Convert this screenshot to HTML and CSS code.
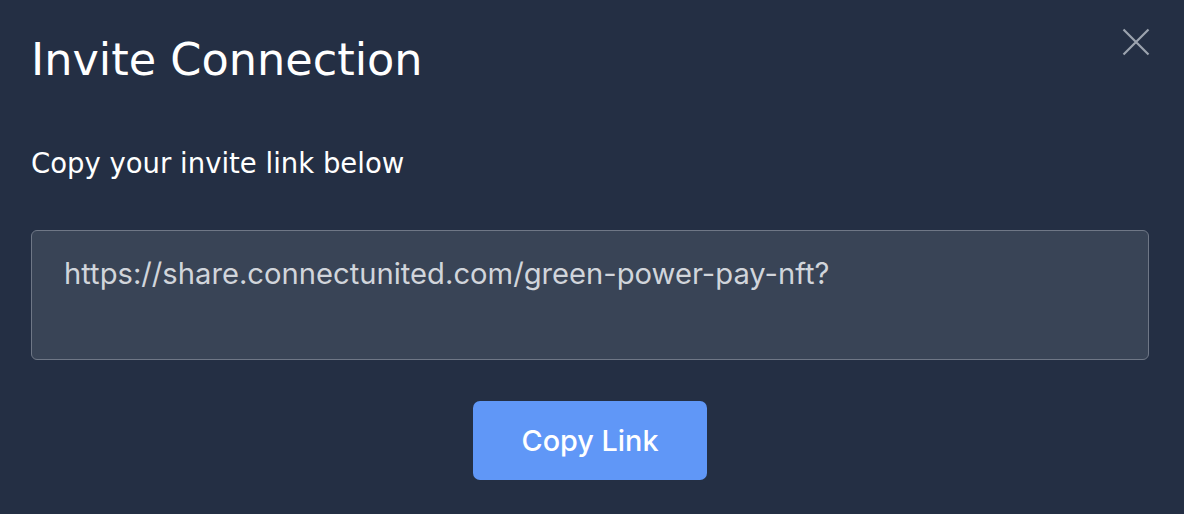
FILE: index.html
```html
<!DOCTYPE html>
<html lang="en">
<head>
<meta charset="utf-8">
<title>Invite Connection</title>
<link rel="stylesheet" href="styles.css">
</head>
<body>
<div class="modal">
  <div class="header">
    <h1 class="title">Invite Connection</h1>
    <button class="close" aria-label="Close">
      <svg width="28" height="28" viewBox="0 0 28 28"><path d="M1.5 1.5 L26.5 26.5 M26.5 1.5 L1.5 26.5" stroke="#9ca3af" stroke-width="2.2" fill="none"/></svg>
    </button>
  </div>
  <p class="subtitle">Copy your invite link below</p>
  <div class="field">https://share.connectunited.com/green-power-pay-nft?</div>
  <div class="actions">
    <button class="copy">Copy Link</button>
  </div>
</div>
</body>
</html>
```
FILE: styles.css
```css
html, body {
  margin: 0;
  padding: 0;
  background: #242f44;
  height: 100%;
}
.modal {
  padding: 28px 35px 0 31px;
  display: flex;
  flex-direction: column;
}
.header {
  display: flex;
  justify-content: space-between;
  align-items: flex-start;
}
.title {
  margin: 0;
  padding-top: 6px;
  font-family: "DejaVu Sans", sans-serif;
  font-weight: normal;
  font-size: 44.6px;
  line-height: 52px;
  color: #ffffff;
}
.close {
  margin: 0;
  padding: 0;
  border: 0;
  background: none;
  width: 28px;
  height: 28px;
  margin-right: -1px;
  display: flex;
}
.subtitle {
  margin: 61px 0 0 0;
  font-family: "DejaVu Sans", sans-serif;
  font-size: 27.5px;
  line-height: 32px;
  color: #ffffff;
}
.field {
  margin-top: 51px;
  height: 130px;
  box-sizing: border-box;
  border: 1px solid #6f7786;
  border-radius: 6px;
  background: #394456;
  padding: 25px 32px;
  font-family: Inter, "Liberation Sans", sans-serif;
  font-size: 29.2px;
  line-height: 36px;
  color: #d1d5db;
}
.actions {
  display: flex;
  justify-content: center;
  margin-top: 41px;
}
.copy {
  width: 234px;
  height: 79px;
  border: 0;
  border-radius: 7px;
  background: #6097f7;
  color: #ffffff;
  font-family: Inter, "Liberation Sans", sans-serif;
  font-size: 28.8px;
  font-weight: 500;
}
```
